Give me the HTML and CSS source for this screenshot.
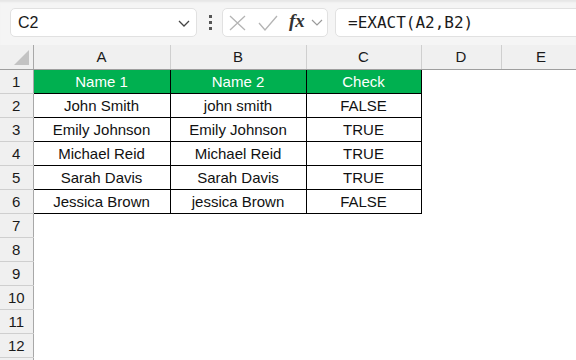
FILE: index.html
```html
<!DOCTYPE html>
<html lang="en">
<head>
    <meta charset="UTF-8">
    <title>EXACT function</title>
    <link rel="stylesheet" href="styles.css">
</head>
<body>
<div class="formula-bar">
    <div class="name-box">
        <span>C2</span>
        <svg class="chev" width="12" height="7" viewBox="0 0 12 7"><path d="M1 1l5 5 5-5" fill="none" stroke="#444" stroke-width="1.3"/></svg>
    </div>
    <div class="grip"><i></i><i></i><i></i></div>
    <div class="fx-box">
        <svg width="17" height="16" viewBox="0 0 17 16"><path d="M1 1l15 14M16 1L1 15" stroke="#b4b4b4" stroke-width="1.3" fill="none"/></svg>
        <svg width="20" height="16" viewBox="0 0 20 16"><path d="M1 8l6 7L19 1" stroke="#b4b4b4" stroke-width="1.3" fill="none"/></svg>
        <span class="fx">fx</span>
        <svg width="12" height="7" viewBox="0 0 12 7"><path d="M1 1l5 5 5-5" fill="none" stroke="#9a9a9a" stroke-width="1.2"/></svg>
    </div>
    <div class="formula">=EXACT(A2,B2)</div>
</div>

<div class="grid-wrap">
<table class="sheet">
    <colgroup>
        <col class="c-rh"><col class="c-a"><col class="c-b"><col class="c-c"><col class="c-d"><col class="c-e">
    </colgroup>
    <tr class="col-head">
        <th class="corner"><svg width="16" height="16" viewBox="0 0 16 16"><polygon points="15,0 15,15 0,15" fill="#c3c3c3"/></svg></th>
        <th>A</th><th>B</th><th>C</th><th>D</th><th>E</th>
    </tr>
    <tr>
        <th>1</th><td class="hd">Name 1</td><td class="hd">Name 2</td><td class="hd">Check</td><td class="e"></td><td class="e"></td>
    </tr>
    <tr>
        <th>2</th><td>John Smith</td><td>john smith</td><td>FALSE</td><td class="e"></td><td class="e"></td>
    </tr>
    <tr>
        <th>3</th><td>Emily Johnson</td><td>Emily Johnson</td><td>TRUE</td><td class="e"></td><td class="e"></td>
    </tr>
    <tr>
        <th>4</th><td>Michael Reid</td><td>Michael Reid</td><td>TRUE</td><td class="e"></td><td class="e"></td>
    </tr>
    <tr>
        <th>5</th><td>Sarah Davis</td><td>Sarah Davis</td><td>TRUE</td><td class="e"></td><td class="e"></td>
    </tr>
    <tr>
        <th>6</th><td>Jessica Brown</td><td>jessica Brown</td><td>FALSE</td><td class="e"></td><td class="e"></td>
    </tr>
    <tr><th>7</th><td class="e"></td><td class="e"></td><td class="e"></td><td class="e"></td><td class="e"></td></tr>
    <tr><th>8</th><td class="e"></td><td class="e"></td><td class="e"></td><td class="e"></td><td class="e"></td></tr>
    <tr><th>9</th><td class="e"></td><td class="e"></td><td class="e"></td><td class="e"></td><td class="e"></td></tr>
    <tr><th>10</th><td class="e"></td><td class="e"></td><td class="e"></td><td class="e"></td><td class="e"></td></tr>
    <tr><th>11</th><td class="e"></td><td class="e"></td><td class="e"></td><td class="e"></td><td class="e"></td></tr>
    <tr><th>12</th><td class="e"></td><td class="e"></td><td class="e"></td><td class="e"></td><td class="e"></td></tr>
    <tr><th></th><td class="e"></td><td class="e"></td><td class="e"></td><td class="e"></td><td class="e"></td></tr>
</table>
</div>
</body>
</html>
```

FILE: styles.css
```css
html, body { margin: 0; padding: 0; background: #fff; overflow: hidden; }
body { font-family: "Liberation Sans", Arial, sans-serif; color: #111; width: 576px; height: 360px; }

.formula-bar { display: flex; align-items: center; height: 45px; padding-left: 10px; background: #f5f5f5; box-shadow: inset 0 3px 2px -1px #e6e6e6; box-sizing: border-box; overflow: hidden; }
.name-box { display: flex; align-items: center; justify-content: space-between; width: 187px; height: 29px; box-sizing: border-box; background: #fff; border: 1px solid #e1e1e1; border-radius: 5px; padding: 0 6px 0 7px; font-size: 16px; color: #1a1a1a; flex: none; }
.name-box .chev { margin-top: 2px; }
.grip { display: flex; flex-direction: column; gap: 3px; margin: 0 10px 0 12px; }
.grip i { display: block; width: 3px; height: 3px; background: #555; }
.fx-box { display: flex; align-items: center; width: 106px; height: 29px; box-sizing: border-box; background: #fff; border: 1px solid #e1e1e1; border-radius: 5px; padding-left: 6px; flex: none; }
.fx-box svg:nth-child(1) { margin-right: 12px; }
.fx-box svg:nth-child(2) { margin-right: 11px; }
.fx { font-family: "Liberation Serif", "Times New Roman", serif; font-style: italic; font-weight: bold; font-size: 19px; color: #333; margin-right: 6px; margin-top: -3px; }
.formula { flex: none; width: 250px; height: 29px; box-sizing: border-box; margin-left: 7px; background: #fff; border: 1px solid #e1e1e1; border-radius: 5px; padding-left: 12px; display: flex; align-items: center; font-family: "DejaVu Sans Mono", monospace; font-size: 16px; color: #1a1a1a; }

.grid-wrap { width: 576px; height: 315px; overflow: hidden; }
.sheet { border-collapse: collapse; table-layout: fixed; width: 581px; font-size: 15px; }
.c-rh { width: 33px; }
.c-a { width: 137px; }
.c-b { width: 136px; }
.c-c { width: 115px; }
.c-d { width: 80px; }
.c-e { width: 80px; }
.sheet tr { height: 24px; }
.sheet th { background: #f0f0f0; font-weight: normal; color: #1a1a1a; padding: 0; border: 1px solid #cfcfcf; border-left: none; text-align: center; }
.sheet tr:first-child th { border-top: none; border-bottom: 1px solid #9e9e9e; height: 23px; }
.sheet tr th:first-child { border-right: 1px solid #a8a8a8; }
.corner { position: relative; }
.corner svg { position: absolute; right: 3px; bottom: 3px; }
.sheet td { border: 1px solid #000; text-align: center; padding: 0; white-space: nowrap; color: #111; }
.sheet td.hd { background: #00b050; color: #fff; }
.sheet td.e { border: none; }
```
